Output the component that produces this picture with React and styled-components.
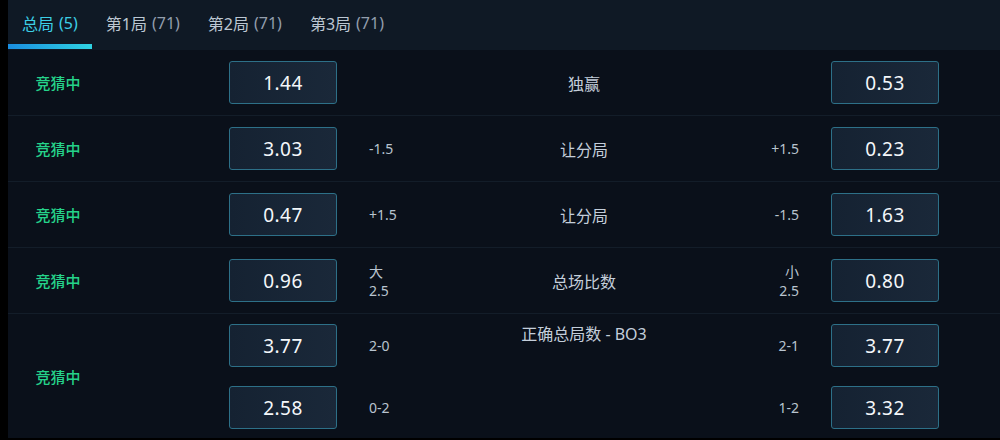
import React, { useState } from 'react';
import styled, { createGlobalStyle } from 'styled-components';

const GlobalStyle = createGlobalStyle`
  html, body {
    margin: 0;
    padding: 0;
    background: #000;
  }
  body {
    padding-left: 8px;
    font-family: "Noto Sans", "Noto Sans CJK SC", sans-serif;
  }
`;

const Panel = styled.div`
  width: 992px;
  height: 438px;
  background: #0a101a;
  overflow: hidden;
`;

const TabBar = styled.div`
  display: flex;
  height: 50px;
  background: #0f1925;
`;

const Tab = styled.div`
  position: relative;
  display: flex;
  align-items: center;
  padding: 0 14px 4px;
  font-size: 16px;
  color: ${p => (p.$active ? '#3ccfe6' : '#bcc7d2')};
  cursor: pointer;

  span {
    margin-left: 5px;
    color: ${p => (p.$active ? '#3ccfe6' : '#939ead')};
  }

  &::after {
    content: '';
    position: absolute;
    left: 0;
    right: 0;
    bottom: 1px;
    height: 5px;
    background: linear-gradient(90deg, #1a8ee0, #2fd3e2);
    display: ${p => (p.$active ? 'block' : 'none')};
  }
`;

const Row = styled.div`
  display: grid;
  grid-template-columns: 100px 121px 108px 32px 95px 240px 95px 32px 108px 61px;
  grid-template-rows: ${p => (p.$double ? '63px 61px' : '65px')};
  align-items: center;
  border-bottom: 1px solid #131d29;
  &:last-child {
    border-bottom: none;
  }
`;

const Status = styled.div`
  grid-column: 1;
  grid-row: ${p => (p.$span ? '1 / span 2' : '1')};
  text-align: center;
  color: #25d38a;
  font-size: 15px;
  font-weight: 500;
`;

const OddsBox = styled.div`
  grid-column: ${p => p.$col};
  grid-row: ${p => p.$row || 1};
  height: 41px;
  border: 1px solid #2d7088;
  border-radius: 3px;
  background: linear-gradient(90deg, #152232, #1a2839);
  display: flex;
  align-items: center;
  justify-content: center;
  color: #f4f7fa;
  font-size: 19px;
  letter-spacing: 0.5px;
`;

const Handicap = styled.div`
  grid-column: ${p => p.$col};
  grid-row: ${p => p.$row || 1};
  color: #b9c4cf;
  font-size: 14px;
  line-height: 19px;
  text-align: ${p => p.$align || 'left'};
`;

const Market = styled.div`
  grid-column: 6;
  grid-row: 1;
  text-align: center;
  color: #c4ceda;
  font-size: 16px;
  align-self: ${p => (p.$top ? 'start' : 'center')};
  padding-top: ${p => (p.$top ? '7px' : '0')};
`;

const markets = [
  { name: '独赢', left: '1.44', right: '0.53' },
  { name: '让分局', left: '3.03', lh: '-1.5', rh: '+1.5', right: '0.23' },
  { name: '让分局', left: '0.47', lh: '+1.5', rh: '-1.5', right: '1.63' },
  { name: '总场比数', left: '0.96', lh: ['大', '2.5'], rh: ['小', '2.5'], right: '0.80' },
];

const Lines = ({ v }) =>
  Array.isArray(v) ? v.map((t, i) => <div key={i}>{t}</div>) : v;

export default function App() {
  const [tab, setTab] = useState(0);
  const tabs = [
    ['总局', '(5)'],
    ['第1局', '(71)'],
    ['第2局', '(71)'],
    ['第3局', '(71)'],
  ];

  return (
    <>
      <GlobalStyle />
      <Panel>
        <TabBar>
          {tabs.map(([t, n], i) => (
            <Tab key={t} $active={tab === i} onClick={() => setTab(i)}>
              {t}
              <span>{n}</span>
            </Tab>
          ))}
        </TabBar>

        {markets.map((m, i) => (
          <Row key={i}>
            <Status>竞猜中</Status>
            <OddsBox $col={3}>{m.left}</OddsBox>
            {m.lh && (
              <Handicap $col={5}>
                <Lines v={m.lh} />
              </Handicap>
            )}
            <Market>{m.name}</Market>
            {m.rh && (
              <Handicap $col={7} $align="right">
                <Lines v={m.rh} />
              </Handicap>
            )}
            <OddsBox $col={9}>{m.right}</OddsBox>
          </Row>
        ))}

        <Row $double>
          <Status $span>竞猜中</Status>
          <Market $top>正确总局数 - BO3</Market>
          <OddsBox $col={3} $row={1}>3.77</OddsBox>
          <Handicap $col={5} $row={1}>2-0</Handicap>
          <Handicap $col={7} $row={1} $align="right">2-1</Handicap>
          <OddsBox $col={9} $row={1}>3.77</OddsBox>
          <OddsBox $col={3} $row={2}>2.58</OddsBox>
          <Handicap $col={5} $row={2}>0-2</Handicap>
          <Handicap $col={7} $row={2} $align="right">1-2</Handicap>
          <OddsBox $col={9} $row={2}>3.32</OddsBox>
        </Row>
      </Panel>
    </>
  );
}
